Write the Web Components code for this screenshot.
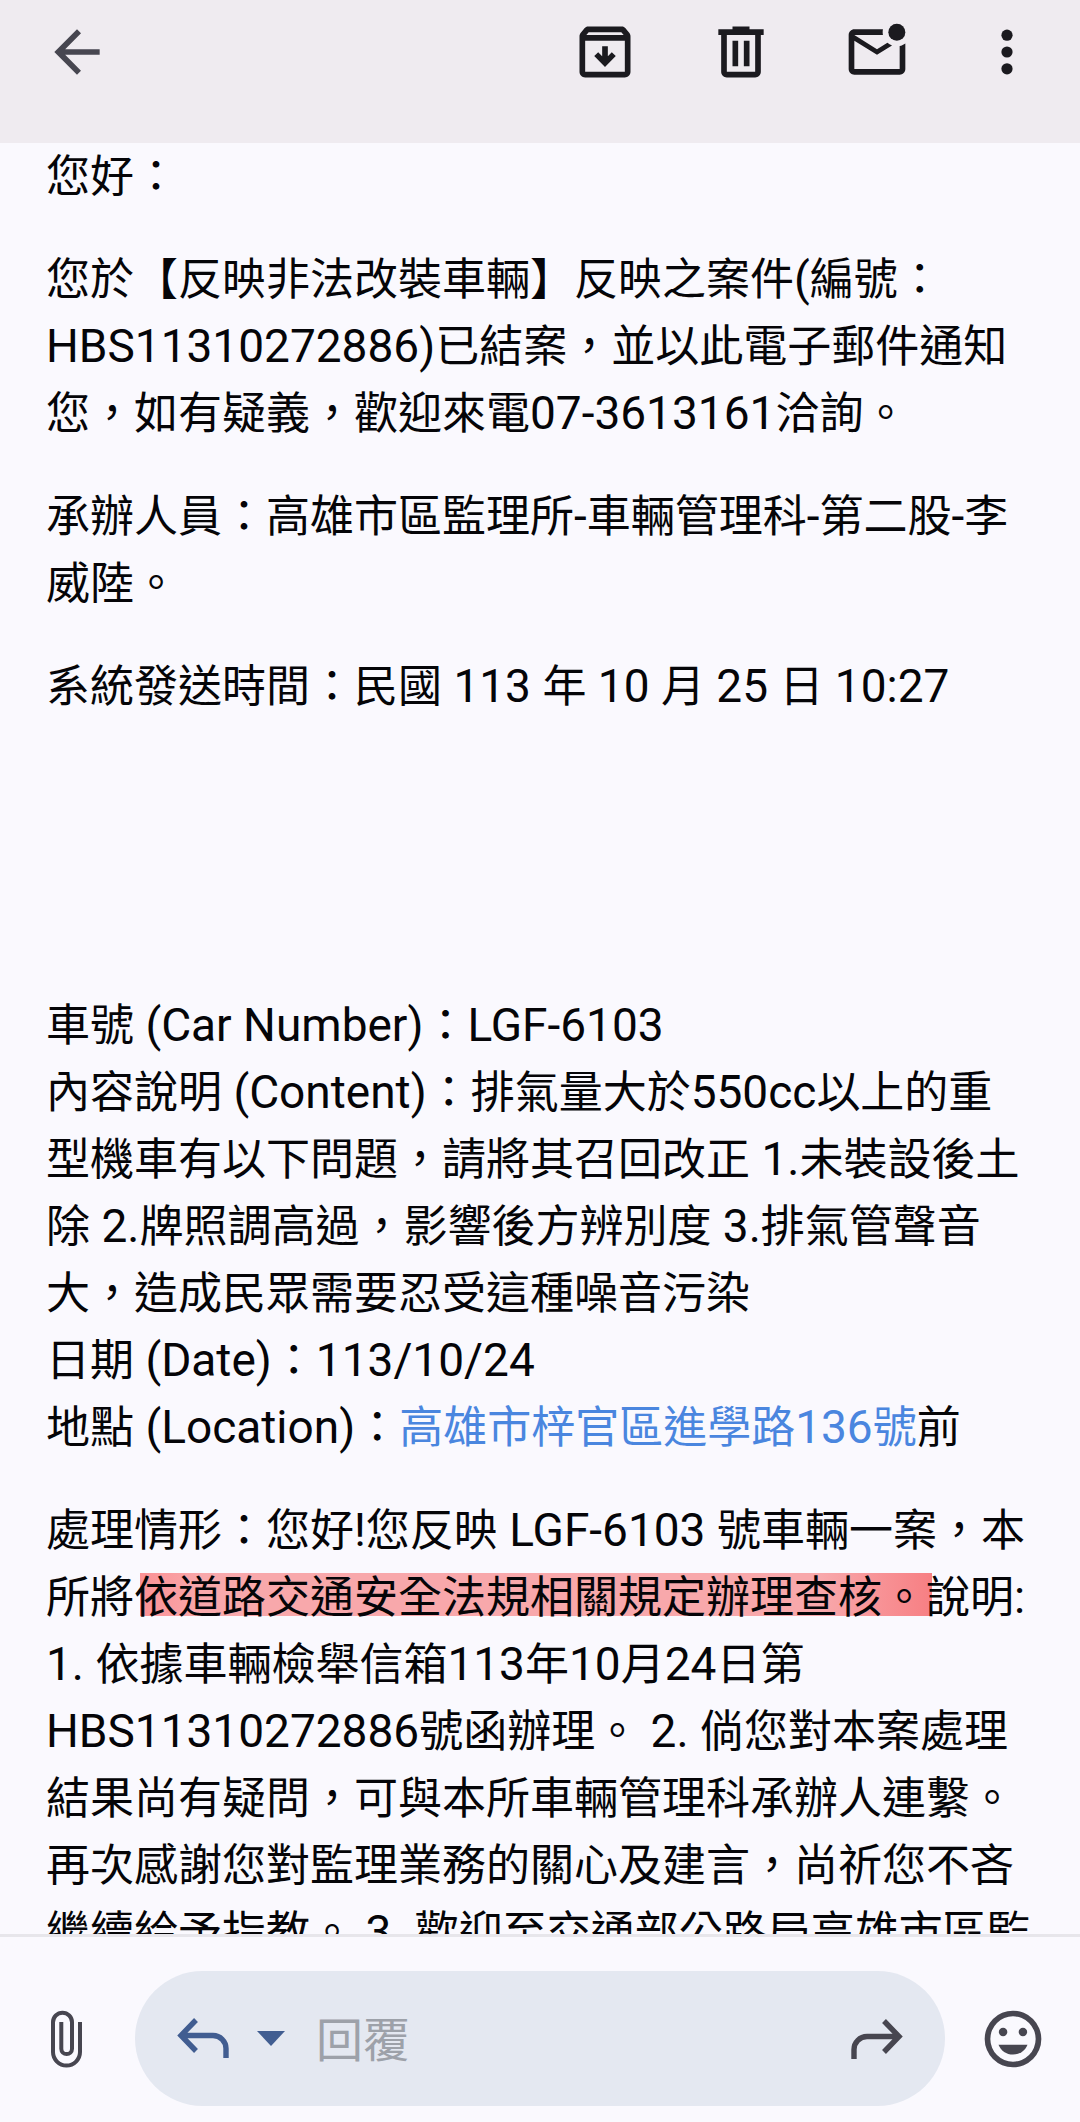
<!DOCTYPE html>
<html lang="zh-Hant-TW">
<head>
<meta charset="utf-8">
<meta name="viewport" content="width=device-width, initial-scale=1">
<title>電子郵件</title>
<style>
	body {
		margin: 0;
		background: #faf9fe;
		color: #050508;
		font-family: "Noto Sans CJK TC", sans-serif;
		font-size: 44px;
		line-height: 67px;
	}
	/* latin and digits run a little larger than the hanzi */
	.la {
		font-family: Roboto, sans-serif;
		font-size: 46px;
		line-height: 1;
	}
	a {
		color: #4a86df;
		text-decoration: none;
	}
	mark {
		color: inherit;
		padding-right: 6px;
		margin-right: -6px;
		background: linear-gradient(90deg, #fb9195, #f8a8ab 8%, #f8a8ab 86%, #f77f83) right center / calc(100% - 6px) 43px no-repeat;
	}
</style>
</head>
<body>
<mail-app>
	<mail-toolbar slot="top"></mail-toolbar>
	<mail-section>
		<mail-paragraph>您好：</mail-paragraph>
		<mail-paragraph>您於【反映非法改裝車輛】反映之案件<span class="la">(</span>編號：<span class="la">HBS11310272886)</span>已結案，並以此電子郵件通知您，如有疑義，歡迎來電<span class="la">07-3613161</span>洽詢。</mail-paragraph>
		<mail-paragraph>承辦人員：高雄市區監理所<span class="la">-</span>車輛管理科<span class="la">-</span>第二股<span class="la">-</span>李威陸。</mail-paragraph>
		<mail-paragraph>系統發送時間：民國<span class="la"> 113 </span>年<span class="la"> 10 </span>月<span class="la"> 25 </span>日<span class="la"> 10:27</span></mail-paragraph>
	</mail-section>
	<mail-section>
		<mail-paragraph>車號<span class="la"> (Car Number)</span>：<span class="la">LGF-6103</span><br>內容說明<span class="la"> (Content)</span>：排氣量大於<span class="la">550cc</span>以上的重型機車有以下問題，請將其召回改正<span class="la"> 1.</span>未裝設後土除<span class="la"> 2.</span>牌照調高過，影響後方辨別度<span class="la"> 3.</span>排氣管聲音大，造成民眾需要忍受這種噪音污染<br>日期<span class="la"> (Date)</span>：<span class="la">113/10/24</span><br>地點<span class="la"> (Location)</span>：<a href="#map">高雄市梓官區進學路<span class="la">136</span>號</a>前</mail-paragraph>
		<mail-paragraph>處理情形：您好<span class="la">!</span>您反映<span class="la"> LGF-6103 </span>號車輛一案，本所將<mark>依道路交通安全法規相關規定辦理查核。</mark>說明<span class="la">:</span> <span class="la">1. </span>依據車輛檢舉信箱<span class="la">113</span>年<span class="la">10</span>月<span class="la">24</span>日第<span class="la">HBS11310272886</span>號函辦理。<span class="la"> 2. </span>倘您對本案處理結果尚有疑問，可與本所車輛管理科承辦人連繫。再次感謝您對監理業務的關心及建言，尚祈您不吝繼續給予指教。<span class="la"> 3. </span>歡迎至交通部公路局高雄市區監</mail-paragraph>
	</mail-section>
	<reply-bar slot="bottom"></reply-bar>
</mail-app>

<script>
class MailApp extends HTMLElement {
	constructor() {
		super();
		this.attachShadow({ mode: 'open' });
	}

	connectedCallback() {
		this.shadowRoot.innerHTML = `
		<style>
		:host {
			display: flex;
			flex-direction: column;
			height: 100vh;
		}
		main {
			flex: 1;
			min-height: 0;
			overflow: hidden;
			padding: 0 46px;
		}
		/* the message is scrolled a little under the toolbar */
		.message {
			display: flex;
			flex-direction: column;
			gap: 272px;
			margin-top: -3px;
		}
		</style>
		<slot name="top"></slot>
		<main><div class="message"><slot></slot></div></main>
		<slot name="bottom"></slot>
		`;
	}
}

class MailSection extends HTMLElement {
	constructor() {
		super();
		this.attachShadow({ mode: 'open' });
	}

	connectedCallback() {
		this.shadowRoot.innerHTML = `
		<style>
		:host {
			display: flex;
			flex-direction: column;
			gap: 36px;
		}
		</style>
		<slot></slot>
		`;
	}
}

class MailParagraph extends HTMLElement {
	constructor() {
		super();
		this.attachShadow({ mode: 'open' });
	}

	connectedCallback() {
		this.shadowRoot.innerHTML = `
		<style>
		:host { display: block; }
		p { margin: 0; }
		</style>
		<p><slot></slot></p>
		`;
	}
}

class MailToolbar extends HTMLElement {
	constructor() {
		super();
		this.attachShadow({ mode: 'open' });
	}

	connectedCallback() {
		this.shadowRoot.innerHTML = `
		<style>
		:host {
			display: block;
			background: #efebf0;
		}
		header {
			display: flex;
			justify-content: space-between;
			padding: 18px 45px 57px 43px;
		}
		div {
			display: flex;
			gap: 68px;
		}
		button {
			display: block;
			padding: 0;
			border: none;
			background: none;
			color: #1b1a1f;
		}
		.back { color: #474650; }
		svg {
			display: block;
			width: 68px;
			height: 68px;
			fill: currentColor;
		}
		.more svg { width: 56px; }
		</style>
		<header>
			<button class="back" aria-label="返回">
				<svg viewBox="0 0 24 24"><path d="M20 11H7.83l5.59-5.59L12 4l-8 8 8 8 1.41-1.41L7.83 13H20z"/></svg>
			</button>
			<div>
				<button aria-label="封存">
					<svg viewBox="0 0 24 24"><path fill-rule="evenodd" d="M20.54 5.23l-1.39-1.68C18.88 3.21 18.47 3 18 3H6c-.47 0-.88.21-1.16.55L3.46 5.23C3.17 5.57 3 6.02 3 6.5V19c0 1.1.9 2 2 2h14c1.1 0 2-.9 2-2V6.5c0-.48-.17-.93-.46-1.27zM6.24 5h11.52l.83 1H5.42zM5 19V8h14v11zM8.2 13.4l1.4-1.3 1.4 1.4V10h2v3.5l1.4-1.4 1.4 1.3-3.8 3.9z"/></svg>
				</button>
				<button aria-label="刪除">
					<svg viewBox="0 0 24 24"><path fill-rule="evenodd" d="M15 4V3H9v1H4v2h1v13c0 1.1.9 2 2 2h10c1.1 0 2-.9 2-2V6h1V4zM17 19H7V6h10zM9 8h2v9H9zM13 8h2v9h-2z"/></svg>
				</button>
				<button aria-label="標示為未讀">
					<svg viewBox="0 0 24 24"><path d="M22 8.98V18c0 1.1-.9 2-2 2H4c-1.1 0-2-.9-2-2V6c0-1.1.9-2 2-2h10.1c-.06.32-.1.66-.1 1 0 .34.04.68.1 1H4l8 5 3.67-2.29c.47.43 1.02.76 1.63.98L12 13 4 8v10h16V9.9c.74-.15 1.42-.48 2-.92z"/><circle cx="19" cy="5" r="3"/></svg>
				</button>
				<button class="more" aria-label="更多選項">
					<svg viewBox="2 0 20 24"><circle cx="12" cy="6" r="2"/><circle cx="12" cy="12" r="2"/><circle cx="12" cy="18" r="2"/></svg>
				</button>
			</div>
		</header>
		`;
	}
}

class ReplyBar extends HTMLElement {
	constructor() {
		super();
		this.attachShadow({ mode: 'open' });
	}

	connectedCallback() {
		this.shadowRoot.innerHTML = `
		<style>
		:host {
			display: block;
			border-top: 3px solid #e7e6eb;
			background: #faf9fe;
		}
		footer {
			display: flex;
			align-items: center;
			gap: 34px;
			padding: 34px 33px 16px;
		}
		.pill {
			flex: 1;
			min-width: 0;
			box-sizing: border-box;
			height: 135px;
			display: flex;
			align-items: center;
			gap: 25px;
			padding: 0 41px;
			border-radius: 68px;
			background: #e4e8f1;
		}
		button {
			display: flex;
			justify-content: center;
			padding: 0;
			border: none;
			background: none;
			color: #474650;
		}
		.side { width: 68px; }
		.blue { color: #415d91; }
		svg {
			display: block;
			fill: none;
			stroke: currentColor;
		}
		.solid {
			fill: currentColor;
			stroke: none;
		}
		input {
			flex: 1;
			min-width: 0;
			padding: 0 0 4px 6px;
			border: none;
			outline: none;
			background: none;
			font-family: "Noto Sans CJK TC", sans-serif;
			font-size: 47px;
			color: #1b1a1f;
		}
		input::placeholder {
			color: #9da1a9;
			opacity: 1;
		}
		</style>
		<footer>
			<button class="side" aria-label="附加檔案">
				<svg width="36" height="60" viewBox="0 0 36 60" stroke-width="4"><path d="M31 13V43a13.5 13.5 0 0 1-27 0V13.2a9.5 9.5 0 0 1 19 0V39.7a5.35 5.35 0 0 1-10.7 0V13"/></svg>
			</button>
			<div class="pill">
				<button class="blue" aria-label="回覆">
					<svg width="56" height="46" viewBox="0 0 56 46" stroke-width="5.4"><path d="M20 4L5 19.5 20 35M5 19.5H37a13 13 0 0 1 13 13V42"/></svg>
				</button>
				<button class="blue" aria-label="選擇回覆方式">
					<svg class="solid" width="28" height="15" viewBox="0 0 28 15"><path d="M0 0H28L14 15z"/></svg>
				</button>
				<input type="text" placeholder="回覆" aria-label="回覆內容">
				<button aria-label="轉寄">
					<svg width="56" height="46" viewBox="0 0 56 46" stroke-width="5.4"><path d="M36 5L51 20.5 36 36M51 20.5H19a13 13 0 0 0-13 13V43"/></svg>
				</button>
			</div>
			<button class="side" aria-label="插入表情符號">
				<svg class="solid" width="68" height="68" viewBox="0 0 24 24"><path fill-rule="evenodd" d="M12 2a10 10 0 1 0 0 20a10 10 0 1 0 0-20zM12 4a8 8 0 1 1 0 16a8 8 0 1 1 0-16z"/><circle cx="8.5" cy="9.5" r="1.5"/><circle cx="15.5" cy="9.5" r="1.5"/><path d="M12 17.5c2.33 0 4.31-1.46 5.11-3.5H6.89c.8 2.04 2.78 3.5 5.11 3.5z"/></svg>
			</button>
		</footer>
		`;
	}
}

customElements.define('mail-app', MailApp);
customElements.define('mail-section', MailSection);
customElements.define('mail-paragraph', MailParagraph);
customElements.define('mail-toolbar', MailToolbar);
customElements.define('reply-bar', ReplyBar);
</script>
</body>
</html>
